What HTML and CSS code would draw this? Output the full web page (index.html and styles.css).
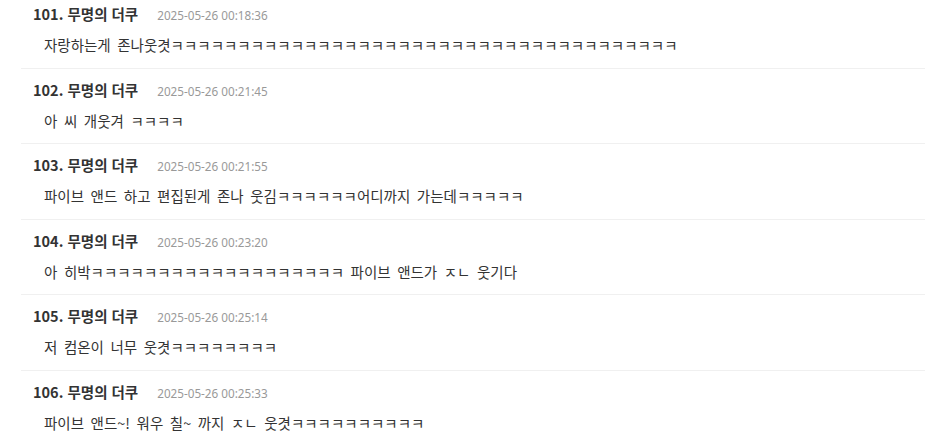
FILE: index.html
```html
<!DOCTYPE html>
<html lang="ko">
<head>
<meta charset="UTF-8">
<meta name="viewport" content="width=device-width, initial-scale=1.0">
<link rel="stylesheet" href="styles.css">
<title>댓글</title>
</head>
<body>
<div class="comments">
<div class="cmt">
<div class="cmt-head"><span class="cmt-name">101. 무명의 더쿠</span><span class="cmt-date">2025-05-26 00:18:36</span></div>
<div class="cmt-body">자랑하는게 존나웃겻ㅋㅋㅋㅋㅋㅋㅋㅋㅋㅋㅋㅋㅋㅋㅋㅋㅋㅋㅋㅋㅋㅋㅋㅋㅋㅋㅋㅋㅋㅋㅋㅋㅋㅋㅋㅋㅋㅋ</div>
</div>
<div class="cmt">
<div class="cmt-head"><span class="cmt-name">102. 무명의 더쿠</span><span class="cmt-date">2025-05-26 00:21:45</span></div>
<div class="cmt-body">아 씨 개웃겨 ㅋㅋㅋㅋ</div>
</div>
<div class="cmt">
<div class="cmt-head"><span class="cmt-name">103. 무명의 더쿠</span><span class="cmt-date">2025-05-26 00:21:55</span></div>
<div class="cmt-body">파이브 앤드 하고 편집된게 존나 웃김ㅋㅋㅋㅋㅋㅋ어디까지 가는데ㅋㅋㅋㅋㅋ</div>
</div>
<div class="cmt">
<div class="cmt-head"><span class="cmt-name">104. 무명의 더쿠</span><span class="cmt-date">2025-05-26 00:23:20</span></div>
<div class="cmt-body">아 히박ㅋㅋㅋㅋㅋㅋㅋㅋㅋㅋㅋㅋㅋㅋㅋㅋㅋㅋㅋ 파이브 앤드가 ㅈㄴ 웃기다</div>
</div>
<div class="cmt">
<div class="cmt-head"><span class="cmt-name">105. 무명의 더쿠</span><span class="cmt-date">2025-05-26 00:25:14</span></div>
<div class="cmt-body">저 컴온이 너무 웃겻ㅋㅋㅋㅋㅋㅋㅋㅋ</div>
</div>
<div class="cmt">
<div class="cmt-head"><span class="cmt-name">106. 무명의 더쿠</span><span class="cmt-date">2025-05-26 00:25:33</span></div>
<div class="cmt-body">파이브 앤드~! 워우 칠~ 까지 ㅈㄴ 웃겻ㅋㅋㅋㅋㅋㅋㅋㅋㅋㅋ</div>
</div>
</div>
</body>
</html>
```
FILE: styles.css
```css
html,
body {
margin: 0;
background: #fff;
overflow: hidden;
}
body {
font-family: "Noto Sans CJK KR", "Noto Sans", sans-serif;
color: #333;
}
.comments {
margin: -7px 0 0 21px;
}
.cmt {
padding: 11px 0 11.5px 12px;
border-bottom: 1px solid #f0f0f0;
}
.cmt-head {
display: flex;
align-items: baseline;
height: 20px;
line-height: 20px;
}
.cmt-name {
font-size: 14.5px;
font-weight: bold;
color: #333;
}
.cmt-date {
margin-left: 19px;
font-family: "Noto Sans", sans-serif;
font-size: 11.7px;
color: #999;
}
.cmt-body {
margin-top: 10px;
padding-left: 11px;
font-size: 14.5px;
line-height: 22px;
word-spacing: 2.5px;
color: #333;
}
```
